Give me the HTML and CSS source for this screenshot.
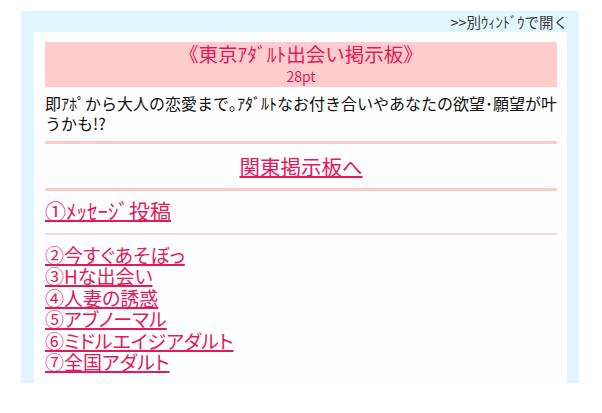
FILE: index.html
```html
<!DOCTYPE html>
<html lang="ja">
<head>
<meta charset="utf-8">
<title>東京ｱﾀﾞﾙﾄ出会い掲示板</title>
<link rel="stylesheet" href="styles.css">
</head>
<body>
<div class="panel">
  <div class="topbar"><a class="open" href="#">&gt;&gt;別ｳｨﾝﾄﾞｳで開く</a></div>
  <div class="inner">
    <div class="head">
      <div class="title">《東京ｱﾀﾞﾙﾄ出会い掲示板》</div>
      <div class="pt">28pt</div>
    </div>
    <p class="desc">即ｱﾎﾟから大人の恋愛まで｡ｱﾀﾞﾙﾄなお付き合いやあなたの欲望･願望が叶うかも!?</p>
    <div class="rule"></div>
    <div class="region"><a href="#">関東掲示板へ</a></div>
    <div class="rule"></div>
    <div class="post"><a href="#">①ﾒｯｾｰｼﾞ投稿</a></div>
    <div class="thin"></div>
    <ul class="menu">
      <li><a href="#">②今すぐあそぼっ</a></li>
      <li><a href="#">③Hな出会い</a></li>
      <li><a href="#">④人妻の誘惑</a></li>
      <li><a href="#">⑤アブノーマル</a></li>
      <li><a href="#">⑥ミドルエイジアダルト</a></li>
      <li><a href="#">⑦全国アダルト</a></li>
    </ul>
  </div>
</div>
</body>
</html>
```

FILE: styles.css
```css
html, body {
  margin: 0;
  background: #ffffff;
}
body {
  width: 602px;
  height: 413px;
  overflow: hidden;
  box-sizing: border-box;
  padding: 11px 23px 0 21px;
  font-family: "Noto Sans CJK JP", "Noto Sans", sans-serif;
}
.panel {
  height: 372px;
  background: #e0f5fd;
  display: flex;
  flex-direction: column;
  overflow: hidden;
}
.topbar {
  height: 21px;
  line-height: 21px;
  text-align: right;
  padding-right: 11px;
  font-size: 14.5px;
}
.open {
  color: #3a3a3a;
  text-decoration: none;
}
.inner {
  flex: 1;
  margin: 0 12px 0 13px;
  padding: 10px 10px 0 11px;
  background: #fefefe;
}
.head {
  background: #ffcccc;
  text-align: center;
  color: #e3195b;
}
.title {
  font-size: 19.5px;
  line-height: 23px;
}
.pt {
  font-size: 14px;
  line-height: 22px;
}
.desc {
  margin: 6px 0 0;
  font-size: 16px;
  line-height: 20px;
  color: #111;
}
.rule {
  height: 3px;
  background: #fdcaca;
  margin-top: 8px;
}
.region + .rule {
  margin-top: 0;
}
.region {
  text-align: center;
  padding: 8px 0;
  line-height: 28px;
  font-size: 20.5px;
}
.post {
  padding: 6px 0 10px;
  line-height: 26px;
  font-size: 21px;
}
.thin {
  height: 2px;
  background: #fbd6d6;
}
.menu {
  list-style: none;
  margin: 9px 0 0;
  padding: 0;
  font-size: 19px;
  font-feature-settings: "palt";
}
.menu li {
  height: 21.4px;
}
.menu a {
  display: inline-block;
  line-height: 21.4px;
  vertical-align: top;
}
.region a, .post a, .menu a {
  color: #e3195b;
  text-decoration: underline;
  text-decoration-thickness: 1.5px;
  text-underline-offset: 1px;
}
```
